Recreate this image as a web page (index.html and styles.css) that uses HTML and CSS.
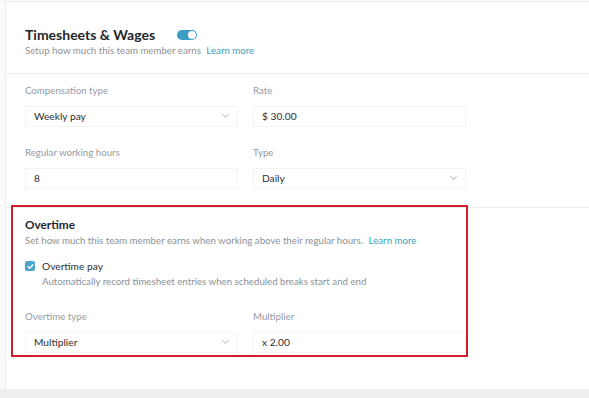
FILE: index.html
```html
<!DOCTYPE html>
<html lang="en">
<head>
    <meta charset="UTF-8">
    <meta name="viewport" content="width=device-width, initial-scale=1.0">
    <title>Timesheets &amp; Wages</title>
    <link rel="stylesheet" href="styles.css">
</head>
<body>
    <div class="page">
        <div class="card">
            <div class="section">
                <div class="head">
                    <h2 class="title">Timesheets &amp; Wages</h2>
                    <span class="toggle"><span class="knob"></span></span>
                </div>
                <p class="sub">Setup how much this team member earns <a class="link">Learn more</a></p>
            </div>

            <div class="section fields">
                <div class="row">
                    <div class="field">
                        <label>Compensation type</label>
                        <div class="input select">Weekly pay<span class="chev"></span></div>
                    </div>
                    <div class="field">
                        <label>Rate</label>
                        <div class="input">$ 30.00</div>
                    </div>
                </div>
                <div class="row">
                    <div class="field">
                        <label>Regular working hours</label>
                        <div class="input">8</div>
                    </div>
                    <div class="field">
                        <label>Type</label>
                        <div class="input select">Daily<span class="chev"></span></div>
                    </div>
                </div>
            </div>

            <div class="section overtime">
                <div class="mark"></div>
                <h3 class="title2">Overtime</h3>
                <p class="sub">Set how much this team member earns when working above their regular hours. <a class="link">Learn more</a></p>
                <div class="check">
                    <span class="box">
                        <svg width="7" height="7" viewBox="0 0 10 10"><path d="M1.6 5.2 4 7.4 8.4 2.6" fill="none" stroke="#fff" stroke-width="1.9" stroke-linecap="round" stroke-linejoin="round"/></svg>
                    </span>
                    <div>
                        <div class="check-label">Overtime pay</div>
                        <div class="check-desc">Automatically record timesheet entries when scheduled breaks start and end</div>
                    </div>
                </div>
                <div class="row">
                    <div class="field">
                        <label>Overtime type</label>
                        <div class="input select">Multiplier<span class="chev"></span></div>
                    </div>
                    <div class="field">
                        <label>Multiplier</label>
                        <div class="input">x 2.00</div>
                    </div>
                </div>
            </div>
        </div>
        <div class="foot"></div>
    </div>
</body>
</html>
```

FILE: styles.css
```css
*{
    box-sizing: border-box;
}
body{
    margin: 0;
    font-family: "Lato", "Liberation Sans", sans-serif;
    color: #2b2f33;
    background-color: #fbfbfb;
}
.page{
    width: 589px;
    height: 398px;
    overflow: hidden;
    padding-top: 1px;
    padding-left: 5px;
}
.card{
    height: 388px;
    background-color: #fff;
    border-top: 1px solid #ececec;
    border-left: 1px solid #ececec;
}
.foot{
    height: 10px;
    margin-left: -5px;
    background-color: #eceef0;
}
.section{
    padding: 0 0 0 19px;
}
.head{
    display: flex;
    align-items: center;
    height: 17px;
    margin-top: 24px;
}
.title{
    margin: 0;
    font-size: 14px;
    font-weight: 700;
    color: #23272b;
}
.toggle{
    position: relative;
    width: 20px;
    height: 10px;
    margin-left: 22px;
    border-radius: 5px;
    background-color: #3d9cc6;
}
.knob{
    position: absolute;
    right: 1px;
    top: 1px;
    width: 8px;
    height: 8px;
    border-radius: 50%;
    background-color: #fff;
}
.sub{
    margin: 1px 0 0;
    font-size: 9.7px;
    line-height: 13px;
    color: #8c9196;
}
.link{
    margin-left: 3px;
    color: #3b9fbf;
}
.fields{
    margin-top: 16px;
    border-top: 1px solid #ececec;
    padding-top: 8px;
    padding-bottom: 18px;
}
.row{
    display: flex;
    gap: 15px;
}
.row + .row{
    margin-top: 17px;
}
.field{
    width: 213px;
}
.field label{
    display: block;
    height: 16px;
    font-size: 9.7px;
    color: #959a9f;
    line-height: 16px;
}
.input{
    position: relative;
    height: 21px;
    margin-top: 8px;
    padding-left: 8px;
    border: 1px solid #f3f3f3;
    font-size: 10.2px;
    line-height: 19px;
    color: #2b2f33;
}
.chev{
    position: absolute;
    right: 9px;
    top: 5px;
    width: 5px;
    height: 5px;
    border-right: 1px solid #c4c7ca;
    border-bottom: 1px solid #c4c7ca;
    transform: rotate(45deg);
}
.overtime{
    position: relative;
    border-top: 1px solid #ececec;
    padding-top: 9px;
}
.mark{
    position: absolute;
    left: 5px;
    top: -3px;
    width: 457px;
    height: 152px;
    border: 2px solid #cf1f2a;
    pointer-events: none;
}
.title2{
    margin: 0;
    font-size: 11.8px;
    line-height: 15px;
    font-weight: 700;
    color: #23272b;
}
.overtime .sub{
    margin-top: 2px;
}
.check{
    display: flex;
    gap: 7px;
    margin-top: 13px;
}
.box{
    display: flex;
    justify-content: center;
    align-items: center;
    width: 10px;
    height: 10px;
    margin-top: 1px;
    border-radius: 2px;
    background-color: #4aa6cc;
}
.check-label{
    font-size: 10.2px;
    line-height: 13px;
    color: #2b2f33;
}
.check-desc{
    margin-top: 2px;
    font-size: 9.7px;
    line-height: 13px;
    color: #8c9196;
}
.overtime .row{
    margin-top: 20px;
}
```
